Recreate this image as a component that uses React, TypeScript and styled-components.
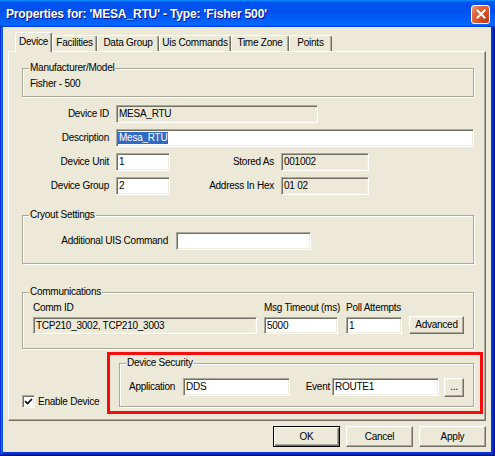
import React from "react";
import styled, { createGlobalStyle } from "styled-components";

const BG = "#ECE9D8";
const FONT = `"Liberation Sans", Arial, sans-serif`;

const Global = createGlobalStyle`
  html, body { margin: 0; padding: 0; background: #ffffff; }
  body { font-family: ${FONT}; font-size: 10px; letter-spacing: -0.25px; color: #000; }
  * { box-sizing: border-box; }
`;

const Window = styled.div`
  width: 495px;
  height: 456px;
  display: flex;
  flex-direction: column;
  background: #0831d9;
  box-shadow: inset -1px -1px #00138c, inset 1px 1px #0831d9, inset -2px -2px #001ea0,
    inset 2px 2px #166aee, inset -3px -3px #003bda, inset 3px 3px #0855dd;
`;

const TitleBar = styled.div`
  height: 27px;
  flex: none;
  display: flex;
  align-items: center;
  justify-content: space-between;
  padding: 1px 5px 0 6px;
  background: linear-gradient(180deg, #0997ff, #0053ee 8%, #0050ee 40%, #06f 88%, #06f 93%, #005bff 95%, #003dd7 96%, #003dd7);
`;

const TitleText = styled.div`
  color: #fff;
  font-family: ${FONT};
  font-weight: bold;
  font-size: 12px;
  letter-spacing: -0.15px;
  text-shadow: 1px 1px #0f1089;
  white-space: nowrap;
`;

const CloseButton = styled.div`
  width: 19px;
  height: 19px;
  border: 1px solid #fff;
  border-radius: 3px;
  background: radial-gradient(circle at 85% 85%, #c13a14 0%, #d9552c 45%, #e2683f 70%, #f2a287 100%);
  display: flex;
  align-items: center;
  justify-content: center;
`;

const Body = styled.div`
  flex: 1;
  margin: 0 4px 4px 3px;
  background: ${BG};
  padding: 5px 5px 0 5px;
  display: flex;
  flex-direction: column;
`;

const TabStrip = styled.div`
  display: flex;
  align-items: flex-end;
  height: 19px;
  padding-left: 7px;
`;

const Tab = styled.div<{ $w: number; $active?: boolean }>`
  width: ${(p) => p.$w}px;
  height: ${(p) => (p.$active ? 20 : 16)}px;
  margin-bottom: ${(p) => (p.$active ? -1 : 0)}px;
  position: relative;
  z-index: ${(p) => (p.$active ? 2 : 0)};
  background: ${BG};
  border-top: 1px solid #fff;
  border-left: 1px solid #fff;
  border-right: 1px solid #716f64;
  box-shadow: inset -1px 0 #aca899;
  border-radius: 3px 3px 0 0;
  text-align: center;
  line-height: 12px;
  padding-top: ${(p) => (p.$active ? 3 : 1)}px;
  white-space: nowrap;
`;

const Panel = styled.div`
  height: 370px;
  flex: none;
  border-top: 1px solid #fff;
  border-left: 1px solid #fff;
  border-right: 1px solid #716f64;
  border-bottom: 1px solid #716f64;
  box-shadow: inset -1px -1px #aca899;
  padding: 0 11px 5px 13px;
  display: flex;
  flex-direction: column;
`;

const GroupBox = styled.div<{ $mt: number }>`
  margin-top: ${(p) => p.$mt}px;
  border: 1px solid #aca899;
  box-shadow: 1px 1px 0 #fff, inset 1px 1px 0 #fff;
`;

const Legend = styled.div`
  width: fit-content;
  height: 12px;
  line-height: 12px;
  margin: -7px 0 0 6px;
  padding: 0 1px;
  background: ${BG};
  white-space: nowrap;
`;

const GroupBody = styled.div<{ $pt: number; $pb: number; $pl: number }>`
  padding: ${(p) => `${p.$pt}px 0 ${p.$pb}px ${p.$pl}px`};
  line-height: 12px;
`;

const FieldGrid = styled.div`
  margin-top: 8px;
  display: flex;
  flex-direction: column;
  gap: 6px;
`;

const FieldRow = styled.div`
  display: flex;
  align-items: center;
  height: 18px;
`;

const FieldLabel = styled.div<{ $w: number; $align?: "left" | "right"; $pr?: number }>`
  flex: none;
  width: ${(p) => p.$w}px;
  text-align: ${(p) => p.$align ?? "right"};
  padding-right: ${(p) => p.$pr ?? 7}px;
  white-space: nowrap;
  line-height: 12px;
`;

const TextBox = styled.div<{ $w: number; $h?: number; $disabled?: boolean }>`
  flex: none;
  width: ${(p) => p.$w}px;
  height: ${(p) => p.$h ?? 18}px;
  border: 1px solid;
  border-color: #aca899 #fff #fff #aca899;
  box-shadow: inset 1px 1px #716f64, inset -1px -1px #f1efe2;
  background: ${(p) => (p.$disabled ? BG : "#fff")};
  padding-left: 2px;
  line-height: ${(p) => (p.$h ?? 18) - 2}px;
  white-space: nowrap;
  overflow: hidden;
`;

const Selected = styled.span`
  display: inline-block;
  background: #316ac5;
  color: #fff;
  line-height: 12px;
  margin-left: -1px;
  padding: 0 1px;
`;

const Columns = styled.div`
  display: flex;
  align-items: flex-end;
`;

const Column = styled.div<{ $w: number; $mr: number }>`
  width: ${(p) => p.$w}px;
  margin-right: ${(p) => p.$mr}px;
  display: flex;
  flex-direction: column;
  gap: 3px;
  white-space: nowrap;
`;

const Button = styled.div<{ $w: number; $h: number; $default?: boolean; $ml?: number }>`
  flex: none;
  width: ${(p) => p.$w}px;
  height: ${(p) => p.$h}px;
  margin-left: ${(p) => p.$ml ?? 0}px;
  background: ${BG};
  border: 1px solid;
  border-color: ${(p) => (p.$default ? "#000" : "#fff #716f64 #716f64 #fff")};
  box-shadow: ${(p) =>
    p.$default
      ? "inset 1px 1px #fff, inset -1px -1px #716f64, inset -2px -2px #aca899"
      : "inset -1px -1px #aca899, inset 1px 1px #f1efe2"};
  display: flex;
  align-items: center;
  justify-content: center;
  white-space: nowrap;
  line-height: 12px;
`;

const BottomArea = styled.div`
  margin-top: 3px;
  display: flex;
  align-items: flex-end;
`;

const CheckRow = styled.div`
  display: flex;
  align-items: center;
  gap: 3px;
  margin-bottom: 6px;
  line-height: 13px;
`;

const CheckBox = styled.div`
  width: 13px;
  height: 13px;
  background: #fff;
  border: 1px solid;
  border-color: #aca899 #fff #fff #aca899;
  box-shadow: inset 1px 1px #716f64, inset -1px -1px #f1efe2;
  display: flex;
  align-items: center;
  justify-content: center;
`;

const HighlightBox = styled.div`
  margin-left: auto;
  margin-right: -9px;
  width: 376px;
  border: 3px solid #f40d0d;
  padding: 8px 6px 4px 9px;
`;

const ButtonBar = styled.div`
  margin-top: 5px;
  display: flex;
  justify-content: flex-end;
  gap: 6px;
`;

const tabs: [string, number][] = [
  ["Device", 37],
  ["Facilities", 45],
  ["Data Group", 62],
  ["Uis Commands", 72],
  ["Time Zone", 58],
  ["Points", 43],
];

export default function App() {
  return (
    <>
      <Global />
      <Window>
        <TitleBar>
          <TitleText>Properties for: 'MESA_RTU' - Type: 'Fisher 500'</TitleText>
          <CloseButton>
            <svg width="10" height="10" viewBox="0 0 10 10">
              <path d="M1.5 1.5 L8.5 8.5 M8.5 1.5 L1.5 8.5" stroke="#fff" strokeWidth="2" strokeLinecap="square" />
            </svg>
          </CloseButton>
        </TitleBar>
        <Body>
          <TabStrip>
            {tabs.map(([t, w], i) => (
              <Tab key={t} $w={w} $active={i === 0}>
                {t}
              </Tab>
            ))}
          </TabStrip>
          <Panel>
            <GroupBox $mt={16}>
              <Legend>Manufacturer/Model</Legend>
              <GroupBody $pt={4} $pb={6} $pl={7}>
                Fisher - 500
              </GroupBody>
            </GroupBox>

            <FieldGrid>
              <FieldRow>
                <FieldLabel $w={94}>Device ID</FieldLabel>
                <TextBox $w={202} $disabled>MESA_RTU</TextBox>
              </FieldRow>
              <FieldRow>
                <FieldLabel $w={94}>Description</FieldLabel>
                <TextBox $w={358}>
                  <Selected>Mesa_RTU</Selected>
                </TextBox>
              </FieldRow>
              <FieldRow>
                <FieldLabel $w={94}>Device Unit</FieldLabel>
                <TextBox $w={54}>1</TextBox>
                <FieldLabel $w={111}>Stored As</FieldLabel>
                <TextBox $w={88} $disabled>001002</TextBox>
              </FieldRow>
              <FieldRow>
                <FieldLabel $w={94}>Device Group</FieldLabel>
                <TextBox $w={54}>2</TextBox>
                <FieldLabel $w={111}>Address In Hex</FieldLabel>
                <TextBox $w={88} $disabled>01 02</TextBox>
              </FieldRow>
            </FieldGrid>

            <GroupBox $mt={20}>
              <Legend>Cryout Settings</Legend>
              <GroupBody $pt={11} $pb={13} $pl={0}>
                <FieldRow>
                  <FieldLabel $w={153} $pr={8}>Additional UIS Command</FieldLabel>
                  <TextBox $w={135} />
                </FieldRow>
              </GroupBody>
            </GroupBox>

            <GroupBox $mt={28}>
              <Legend>Communications</Legend>
              <GroupBody $pt={4} $pb={14} $pl={10}>
                <Columns>
                  <Column $w={224} $mr={7}>
                    <span>Comm ID</span>
                    <TextBox $w={224} $h={17} $disabled>TCP210_3002, TCP210_3003</TextBox>
                  </Column>
                  <Column $w={74} $mr={8}>
                    <span>Msg Timeout (ms)</span>
                    <TextBox $w={74} $h={17}>5000</TextBox>
                  </Column>
                  <Column $w={56} $mr={7}>
                    <span>Poll Attempts</span>
                    <TextBox $w={56} $h={17}>1</TextBox>
                  </Column>
                  <Button $w={55} $h={18}>Advanced</Button>
                </Columns>
              </GroupBody>
            </GroupBox>

            <BottomArea>
              <CheckRow>
                <CheckBox>
                  <svg width="9" height="9" viewBox="0 0 9 9">
                    <path d="M1 4 L3.5 6.5 L8 2" stroke="#000" strokeWidth="1.7" fill="none" />
                  </svg>
                </CheckBox>
                <span>Enable Device</span>
              </CheckRow>
              <HighlightBox>
                <GroupBox $mt={0}>
                  <Legend>Device Security</Legend>
                  <GroupBody $pt={9} $pb={10} $pl={9}>
                    <FieldRow>
                      <FieldLabel $w={54} $align="left" $pr={0}>Application</FieldLabel>
                      <TextBox $w={107}>DDS</TextBox>
                      <FieldLabel $w={42} $pr={2}>Event</FieldLabel>
                      <TextBox $w={107}>ROUTE1</TextBox>
                      <Button $w={20} $h={19} $ml={5}>...</Button>
                    </FieldRow>
                  </GroupBody>
                </GroupBox>
              </HighlightBox>
            </BottomArea>
          </Panel>
          <ButtonBar>
            <Button $w={67} $h={21} $default>OK</Button>
            <Button $w={67} $h={21}>Cancel</Button>
            <Button $w={67} $h={21}>Apply</Button>
          </ButtonBar>
        </Body>
      </Window>
    </>
  );
}
